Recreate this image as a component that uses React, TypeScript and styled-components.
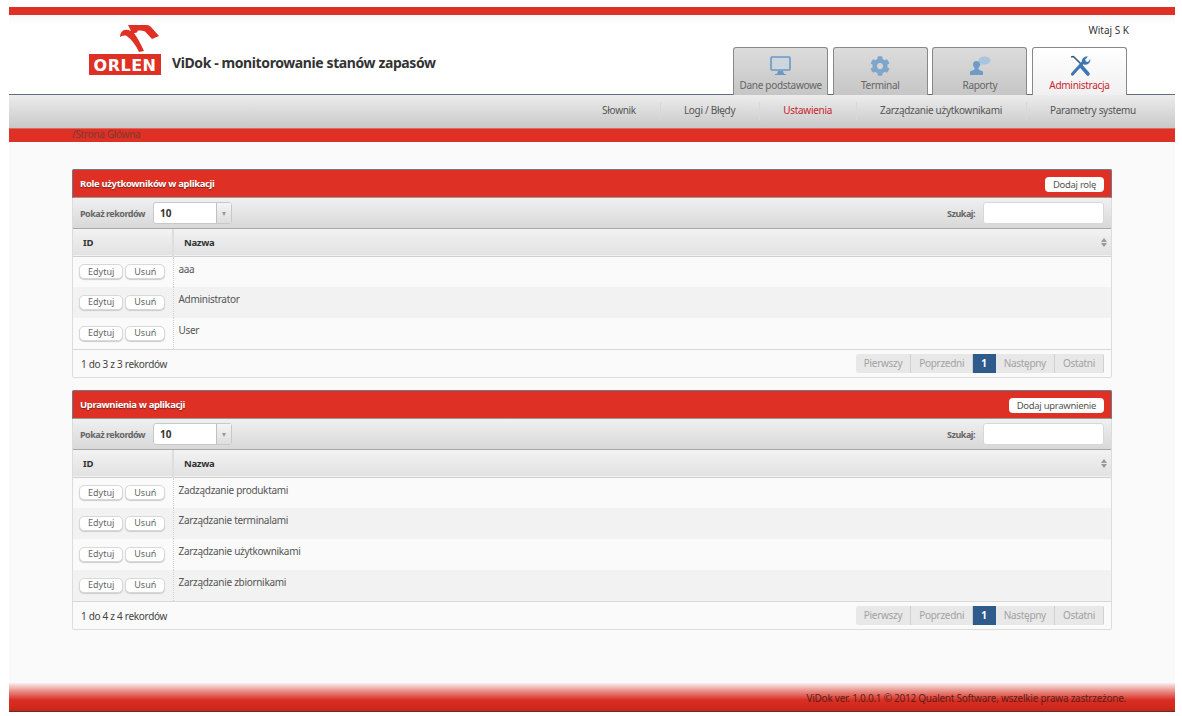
import React from "react";
import styled, { createGlobalStyle } from "styled-components";
import { FaCog } from "react-icons/fa";

const GlobalStyle = createGlobalStyle`
  html, body {
    margin: 0;
    padding: 0;
    background: #ffffff;
  }
  body {
    font-family: "Noto Sans", "Open Sans", "DejaVu Sans", sans-serif;
    font-size: 10px;
    letter-spacing: -0.3px;
    color: #444;
  }
  * { box-sizing: border-box; }
`;

const Page = styled.div`
  width: 1166px;
  height: 712px;
  margin: 0 0 0 9px;
  padding-top: 7px;
  display: flex;
  flex-direction: column;
`;

const TopStripe = styled.div`
  height: 8px;
  background: #de3024;
`;

const Header = styled.header`
  height: 80px;
  position: relative;
  display: flex;
  justify-content: space-between;
  background: linear-gradient(#f7f7f7 0, #ffffff 10px);
  border-bottom: 1px solid #5f6f80;
`;

const Brand = styled.div`
  display: flex;
  align-items: flex-end;
  gap: 11px;
  padding: 9px 0 0 80px;
  height: 60px;
`;

const BrandTitle = styled.h1`
  margin: 0 0 3px;
  font-size: 14px;
  font-weight: 700;
  color: #333;
  letter-spacing: -0.4px;
`;

const HeaderRight = styled.div`
  display: flex;
  flex-direction: column;
  align-items: flex-end;
`;

const Greeting = styled.div`
  height: 30px;
  padding: 8px 46px 0 0;
  font-size: 10px;
  letter-spacing: 0;
  color: #333;
`;

const Tabs = styled.nav`
  display: flex;
  gap: 4.6px;
  padding-right: 48px;
  margin-top: auto;
  margin-bottom: -1px;
`;

const Tab = styled.a<{ $active?: boolean }>`
  width: 95px;
  height: 48px;
  border: 1px solid #888;
  border-bottom: none;
  border-radius: 3px 3px 0 0;
  display: flex;
  flex-direction: column;
  align-items: center;
  justify-content: space-between;
  padding: 6px 0 4px;
  background: ${(p) =>
    p.$active ? "linear-gradient(#ffffff, #f0f0f0)" : "linear-gradient(#dcdcdc, #c6c6c6)"};
  color: ${(p) => (p.$active ? "#c8242c" : "#666")};
  font-size: 10px;
  line-height: 12px;
`;

const TabIcon = styled.div`
  height: 24px;
  display: flex;
  align-items: center;
  color: #5d8cba;
`;

const SubNav = styled.nav`
  height: 33px;
  display: flex;
  justify-content: flex-end;
  align-items: center;
  padding: 0 15px 2px 0;
  background: linear-gradient(#ececec, #c9c9c9);
`;

const SubNavItem = styled.a<{ $active?: boolean }>`
  height: 18px;
  padding: 0 24px 0 23px;
  line-height: 16px;
  font-size: 10px;
  color: ${(p) => (p.$active ? "#c8242c" : "#555")};
  border-left: 1px solid #d8d8d8;
  &:first-child { border-left: none; }
  &:last-child { padding-right: 24px; }
`;

const Breadcrumb = styled.div`
  height: 14px;
  padding-left: 63px;
  background: #de3024;
  border-top: 1px solid #e0695f;
  font-size: 10px;
  line-height: 10px;
  color: #7d3a32;
`;

const Content = styled.main`
  flex: 1;
  background: #fafafa;
  padding: 27px 63px 0 63px;
  display: flex;
  flex-direction: column;
  gap: 12px;
`;

const Panel = styled.section`
  border: 1px solid #dcdcdc;
  border-radius: 2px;
  background: #fafafa;
`;

const PanelHead = styled.div`
  height: 29px;
  display: flex;
  justify-content: space-between;
  align-items: center;
  padding: 0 7px;
  margin: -1px -1px 0;
  background: #de3024;
  border: 1px solid #6c7a8c;
  border-bottom-color: #9a9a9a;
  border-radius: 2px 2px 0 0;
`;

const PanelTitle = styled.h2`
  margin: 0;
  font-size: 9.5px;
  font-weight: 700;
  letter-spacing: -0.35px;
  color: #fff;
  text-shadow: 0 1px 1px #7a2018;
`;

const AddButton = styled.button`
  height: 15px;
  margin-top: 1px;
  padding: 0 8px;
  border: none;
  border-radius: 4px;
  background: #fff;
  font: inherit;
  font-size: 9.5px;
  letter-spacing: -0.3px;
  line-height: 15px;
  color: #555;
`;

const Toolbar = styled.div`
  height: 31px;
  display: flex;
  align-items: center;
  justify-content: space-between;
  padding: 0 7px;
  background: linear-gradient(#f0f0f0, #d8d8d8);
  border-bottom: 1px solid #a8a8a8;
`;

const ToolGroup = styled.label`
  display: flex;
  align-items: center;
  gap: 8px;
  font-size: 9px;
  font-weight: 700;
  letter-spacing: -0.5px;
  color: #666;
`;

const SelectBox = styled.div`
  width: 79px;
  height: 22px;
  display: flex;
  border: 1px solid #c8c8c8;
  border-radius: 3px;
  background: #fff;
`;

const SelectValue = styled.span`
  flex: 1;
  padding-left: 6px;
  font-size: 10px;
  line-height: 21px;
  letter-spacing: 0;
  color: #333;
`;

const SelectArrow = styled.span`
  width: 15px;
  display: flex;
  align-items: center;
  justify-content: center;
  border-left: 1px solid #c0c0c0;
  background: linear-gradient(#f4f4f4, #dedede);
  &::after {
    content: "";
    border: 2.5px solid transparent;
    border-top: 4px solid #999;
    margin-top: 4px;
  }
`;

const SearchInput = styled.input`
  width: 121px;
  height: 22px;
  border: 1px solid #d8d8d8;
  border-radius: 3px;
  background: #fff;
`;

const Table = styled.table`
  width: 100%;
  border-collapse: collapse;
  table-layout: fixed;
`;

const HeadRow = styled.tr`
  height: 27px;
  background: linear-gradient(#f2f2f2, #e2e2e2);
  border-bottom: 1px solid #cfcfcf;
`;

const HeadCell = styled.th<{ $narrow?: boolean }>`
  position: relative;
  width: ${(p) => (p.$narrow ? "100px" : "auto")};
  padding: 1px 10px 0;
  font-size: 9.5px;
  font-weight: 700;
  letter-spacing: -0.3px;
  text-align: left;
  color: #333;
  border-right: ${(p) => (p.$narrow ? "2px solid #dedede" : "none")};
`;

const SortIcon = styled.span`
  position: absolute;
  right: 3px;
  top: 9px;
  width: 7px;
  height: 9px;
  &::before, &::after {
    content: "";
    position: absolute;
    left: 0;
    border: 3.5px solid transparent;
  }
  &::before { top: -3px; border-bottom: 4px solid #999; }
  &::after { bottom: -3px; border-top: 4px solid #999; }
`;

const Row = styled.tr<{ $alt?: boolean }>`
  height: 31px;
  background: ${(p) => (p.$alt ? "#f2f2f2" : "#fafafa")};
`;

const ActionCell = styled.td`
  padding: 7px 0 0 6px;
  vertical-align: top;
  border-right: 1px dotted #d0d0d0;
`;

const NameCell = styled.td`
  padding: 5px 0 0 5px;
  vertical-align: top;
  font-size: 10px;
  line-height: 14px;
  color: #555;
`;

const RowButton = styled.button`
  height: 15px;
  padding: 0 8px;
  margin-right: 2px;
  border: 1px solid #d8d8d8;
  border-radius: 5px;
  background: #fff;
  box-shadow: 0 1px 1px #ccc;
  font: inherit;
  font-size: 9px;
  letter-spacing: 0;
  line-height: 12px;
  color: #666;
`;

const Footer = styled.div`
  height: 28px;
  display: flex;
  align-items: center;
  justify-content: space-between;
  padding: 0 7px 0 8px;
  background: #fafafa;
  border-top: 1px solid #d8d8d8;
  font-size: 10px;
  color: #444;
`;

const Pager = styled.div`
  display: flex;
  height: 19px;
`;

const PageButton = styled.span<{ $current?: boolean }>`
  padding: 0 8px;
  font-size: 10px;
  line-height: 18px;
  background: ${(p) => (p.$current ? "#2f5b8c" : "#e8e8e8")};
  color: ${(p) => (p.$current ? "#fff" : "#a2a2a2")};
  border-right: 1px solid ${(p) => (p.$current ? "#2f5b8c" : "#d0d0d0")};
  font-weight: ${(p) => (p.$current ? 700 : 400)};
  &:first-child { border-radius: 2px 0 0 2px; }
  &:last-child { border-radius: 0 2px 2px 0; }
`;

const PageFooter = styled.footer`
  height: 29px;
  padding: 8px 49px 0 0;
  text-align: right;
  font-size: 10px;
  letter-spacing: -0.25px;
  line-height: 14px;
  color: #5c2018;
  background: linear-gradient(#fbeeee 0, #e89088 8px, #d92f24 17px, #cc2418 100%);
  border-bottom: 1px solid #553333;
`;

function Logo() {
  return (
    <svg width="72" height="51" viewBox="0 0 72 51">
      <path
        d="M39 1 H58 Q60 1 62 3 L70 12 L63 15 L56 7.5 Q53 6 49 6.5 Q48 9.5 45 9 Q50 16 55 27 L50 28 Q45 17 37 11.5 Q33 11 31 13 Q31 8 35 6 Q38 5 42 7 Q40 3 39 1 Z"
        fill="#de3024"
      />
      <rect x="0" y="30" width="72" height="21" fill="#de3024" />
      <text x="36" y="46.5" textAnchor="middle" fontFamily="DejaVu Sans, sans-serif" fontWeight="700" fontSize="16" fill="#fff" letterSpacing="0.5">
        ORLEN
      </text>
    </svg>
  );
}

function MonitorIcon() {
  return (
    <svg width="21" height="20" viewBox="0 0 21 20">
      <rect x="1" y="1" width="19" height="13" rx="1" fill="#cdd6de" stroke="#6a98c4" strokeWidth="1.6" />
      <path d="M8 15h5l1 3h2v1H5v-1h2z" fill="#6a98c4" />
    </svg>
  );
}

function ReportIcon() {
  return (
    <svg width="22" height="20" viewBox="0 0 22 20">
      <ellipse cx="15.5" cy="4.5" rx="6" ry="4" fill="#a9c4de" />
      <path d="M12 7l-2 3 4-2z" fill="#a9c4de" />
      <circle cx="7.5" cy="8.5" r="3.5" fill="#6f9bc6" />
      <path d="M5.5 11h4v2.5l4.5 2V19H1v-3.5l4.5-2z" fill="#6f9bc6" />
    </svg>
  );
}

function ToolsIcon() {
  return (
    <svg width="22" height="22" viewBox="0 0 22 22">
      <path d="M2 2l2.5-.5L13 10" fill="none" stroke="#33597f" strokeWidth="1.6" />
      <path d="M12 11l7 8" fill="none" stroke="#3f78b0" strokeWidth="3.6" strokeLinecap="round" />
      <path d="M3.5 19L14 7.5" fill="none" stroke="#3f78b0" strokeWidth="3.2" strokeLinecap="round" />
      <path d="M13 7.5C12.2 3.5 15.5 .8 19 1.6L16.2 4.4 17 6.4 19 7 21.2 4C21.8 7.8 18.5 10.6 15 9.5z" fill="#3f78b0" />
    </svg>
  );
}

type Record = { name: string };

function DataPanel(props: { title: string; add: string; rows: Record[] }) {
  const n = props.rows.length;
  return (
    <Panel>
      <PanelHead>
        <PanelTitle>{props.title}</PanelTitle>
        <AddButton>{props.add}</AddButton>
      </PanelHead>
      <Toolbar>
        <ToolGroup>
          Pokaż rekordów
          <SelectBox>
            <SelectValue>10</SelectValue>
            <SelectArrow />
          </SelectBox>
        </ToolGroup>
        <ToolGroup>
          Szukaj:
          <SearchInput />
        </ToolGroup>
      </Toolbar>
      <Table>
        <thead>
          <HeadRow>
            <HeadCell $narrow>ID</HeadCell>
            <HeadCell>
              Nazwa
              <SortIcon />
            </HeadCell>
          </HeadRow>
        </thead>
        <tbody>
          {props.rows.map((r, i) => (
            <Row key={r.name} $alt={i % 2 === 1}>
              <ActionCell>
                <RowButton>Edytuj</RowButton>
                <RowButton>Usuń</RowButton>
              </ActionCell>
              <NameCell>{r.name}</NameCell>
            </Row>
          ))}
        </tbody>
      </Table>
      <Footer>
        <span>{`1 do ${n} z ${n} rekordów`}</span>
        <Pager>
          <PageButton>Pierwszy</PageButton>
          <PageButton>Poprzedni</PageButton>
          <PageButton $current>1</PageButton>
          <PageButton>Następny</PageButton>
          <PageButton>Ostatni</PageButton>
        </Pager>
      </Footer>
    </Panel>
  );
}

export default function App() {
  return (
    <>
      <GlobalStyle />
      <Page>
        <TopStripe />
        <Header>
          <Brand>
            <Logo />
            <BrandTitle>ViDok - monitorowanie stanów zapasów</BrandTitle>
          </Brand>
          <HeaderRight>
            <Greeting>Witaj S K</Greeting>
            <Tabs>
              <Tab>
                <TabIcon><MonitorIcon /></TabIcon>
                Dane podstawowe
              </Tab>
              <Tab>
                <TabIcon><FaCog size={20} color="#7ea6cc" /></TabIcon>
                Terminal
              </Tab>
              <Tab>
                <TabIcon><ReportIcon /></TabIcon>
                Raporty
              </Tab>
              <Tab $active>
                <TabIcon><ToolsIcon /></TabIcon>
                Administracja
              </Tab>
            </Tabs>
          </HeaderRight>
        </Header>
        <SubNav>
          <SubNavItem>Słownik</SubNavItem>
          <SubNavItem>Logi / Błędy</SubNavItem>
          <SubNavItem $active>Ustawienia</SubNavItem>
          <SubNavItem>Zarządzanie użytkownikami</SubNavItem>
          <SubNavItem>Parametry systemu</SubNavItem>
        </SubNav>
        <Breadcrumb>/Strona Główna</Breadcrumb>
        <Content>
          <DataPanel
            title="Role użytkowników w aplikacji"
            add="Dodaj rolę"
            rows={[{ name: "aaa" }, { name: "Administrator" }, { name: "User" }]}
          />
          <DataPanel
            title="Uprawnienia w aplikacji"
            add="Dodaj uprawnienie"
            rows={[
              { name: "Zadządzanie produktami" },
              { name: "Zarządzanie terminalami" },
              { name: "Zarządzanie użytkownikami" },
              { name: "Zarządzanie zbiornikami" },
            ]}
          />
        </Content>
        <PageFooter>ViDok ver. 1.0.0.1 © 2012 Qualent Software, wszelkie prawa zastrzeżone.</PageFooter>
      </Page>
    </>
  );
}
